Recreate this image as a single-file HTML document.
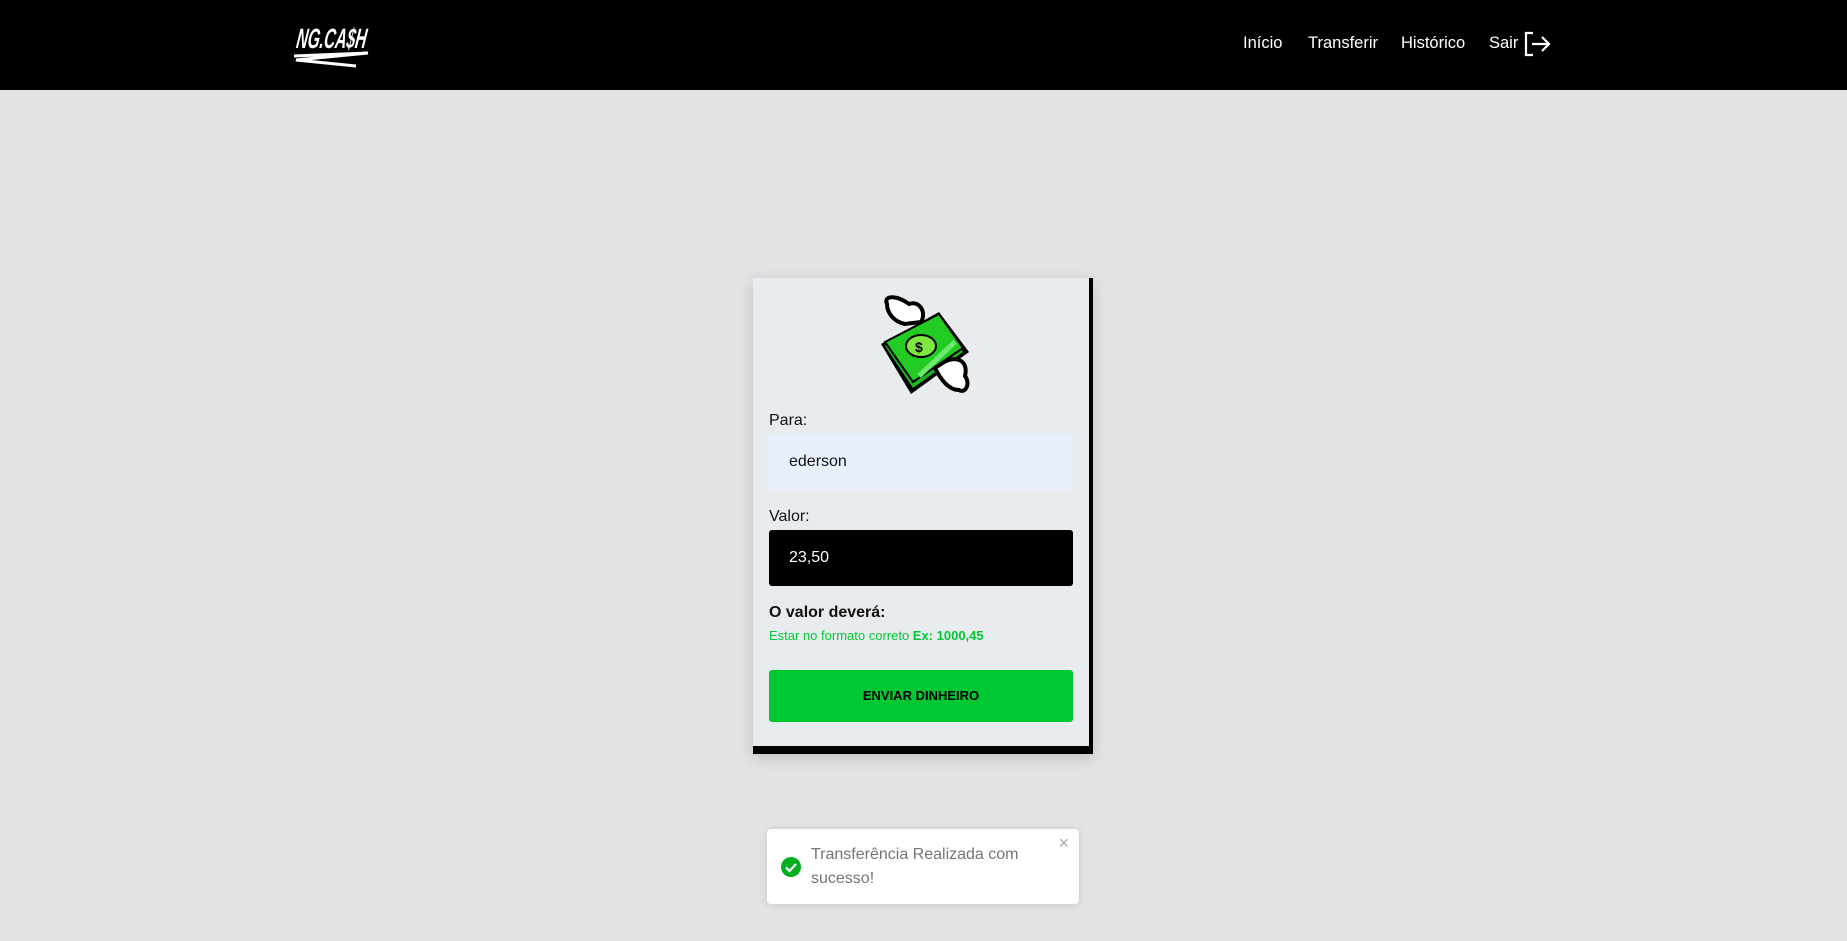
<!DOCTYPE html>
<html><head><meta charset="utf-8"><style>
*{margin:0;padding:0;box-sizing:border-box}
body{width:1847px;height:941px;background:#e3e3e5;font-family:"Liberation Sans",sans-serif;position:relative;overflow:hidden}
.nav{position:absolute;left:0;top:0;width:1847px;height:90px;background:#000}
.nav a{position:absolute;top:34px;color:#fff;font-size:16.5px;text-decoration:none}
.card{position:absolute;left:753px;top:278px;width:340px;height:476px;background:#e9ecef;border-right:4px solid #000;border-bottom:8px solid #000;box-shadow:0 4px 14px rgba(0,0,0,.15)}
.lbl{position:absolute;left:16px;font-size:16px;color:#111}
.inp{position:absolute;left:16px;width:304px;height:56px;border-radius:3px;font-size:16px;padding-left:20px;line-height:56px}
.toast{position:absolute;left:767px;top:829px;width:312px;height:75px;background:#fff;border-radius:4px;box-shadow:0 1px 8px rgba(0,0,0,.12)}
</style></head><body>
<div class="nav">
<svg style="position:absolute;left:292px;top:16px" width="80" height="56" viewBox="0 0 80 56">
<text x="8" y="32" font-family="Liberation Sans,sans-serif" font-style="italic" font-weight="bold" font-size="28" fill="#fff" transform="skewX(-8)" textLength="70" lengthAdjust="spacingAndGlyphs">NG.CA$H</text>
<path d="M2 40 L76 37 L4 44 L64 50" stroke="#fff" stroke-width="3" fill="none"/>
</svg>
<a style="left:1243px">Início</a>
<a style="left:1308px">Transferir</a>
<a style="left:1401px">Histórico</a>
<a style="left:1489px">Sair</a>
<svg style="position:absolute;left:1524px;top:31px" width="27" height="26" viewBox="0 0 27 26" fill="none" stroke="#fff" stroke-width="2.2"><path d="M9 2H2V24H9"/><path d="M8 13H25M18 6L25 13L18 20"/></svg>
</div>
<div class="card">
<svg style="position:absolute;left:116px;top:16px" width="108" height="110" viewBox="0 0 108 110">
<path d="M12 50 L70 18 L100 58 L42 100 Z" fill="#000"/>
<path d="M16 52 L70 24 L94 58 L44 94 Z" fill="#1db51d"/>
<path d="M16 48 L70 20 L94 54 L44 88 Z" fill="#22cc22" stroke="#000" stroke-width="2"/>
<path d="M50 82 L86 48" stroke="#6fe86f" stroke-width="5"/>
<ellipse cx="52" cy="52" rx="15" ry="11" fill="#7ee840" stroke="#000" stroke-width="2"/>
<text x="46" y="58" font-size="14" font-weight="bold" fill="#000" font-family="Liberation Sans">$</text>
<path d="M18 10 C14 0 30 2 40 10 C50 6 58 18 52 28 L36 30 C26 28 18 20 18 10Z" fill="#fff" stroke="#000" stroke-width="4"/>
<path d="M72 70 C86 60 100 66 96 82 C102 90 96 100 90 96 C80 96 72 86 66 74Z" fill="#fff" stroke="#000" stroke-width="4"/>
</svg>
<div class="lbl" style="top:134px">Para:</div>
<div class="inp" style="top:156px;background:#e8f0fe;color:#111">ederson</div>
<div class="lbl" style="top:230px">Valor:</div>
<div class="inp" style="top:252px;background:#000;color:#fff">23,50</div>
<div class="lbl" style="top:326px;font-weight:bold">O valor deverá:</div>
<div style="position:absolute;left:16px;top:350px;font-size:13px;color:#00c832">Estar no formato correto <b>Ex: 1000,45</b></div>
<div style="position:absolute;left:16px;top:392px;width:304px;height:52px;background:#00c832;border-radius:3px;text-align:center;line-height:52px;font-size:13px;font-weight:bold;color:#000">ENVIAR DINHEIRO</div>
</div>
<div class="toast">
<svg style="position:absolute;left:13px;top:27px" width="22" height="22" viewBox="0 0 22 22"><circle cx="11" cy="11" r="10" fill="#00b020"/><path d="M6 11.5L9.5 15L16 8" stroke="#fff" stroke-width="2.2" fill="none"/></svg>
<div style="position:absolute;left:44px;top:14px;width:220px;font-size:16px;line-height:24px;color:#757575">Transferência Realizada com sucesso!</div>
<div style="position:absolute;right:10px;top:4px;font-size:18px;color:#aaa">×</div>
</div>
</body></html>
